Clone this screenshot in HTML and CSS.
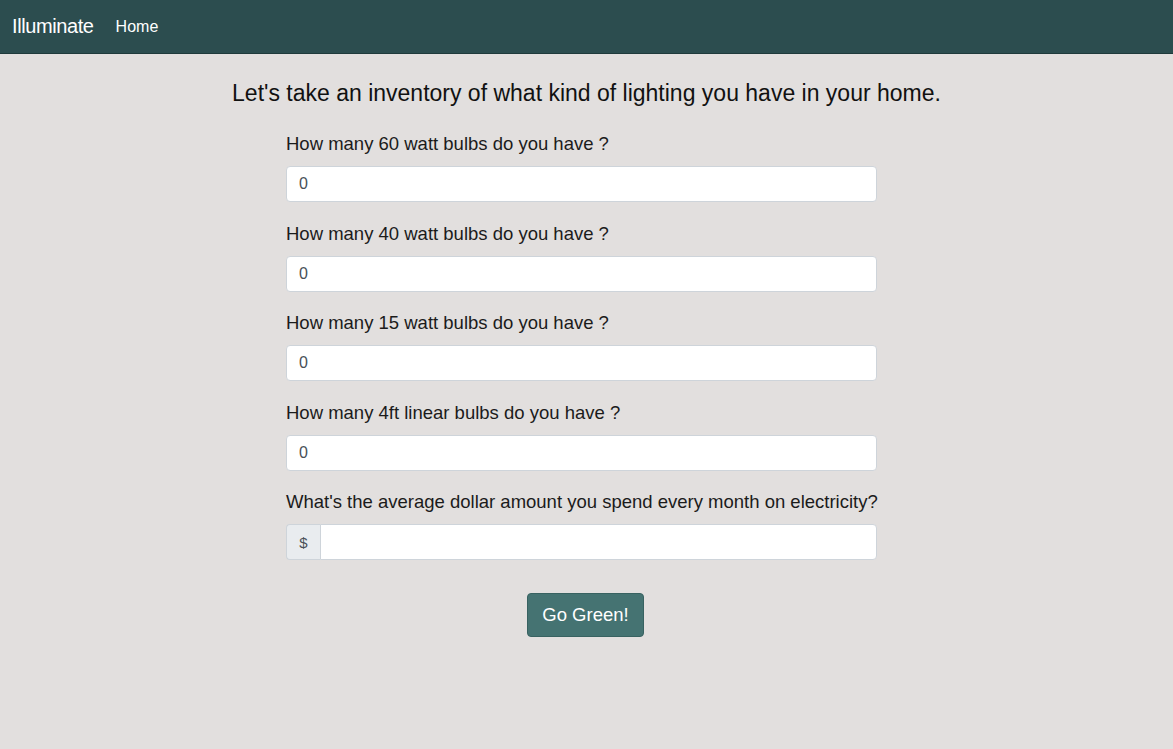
FILE: index.html
```html
<!DOCTYPE html>
<html>
<head>
<meta charset="utf-8">
<link rel="stylesheet" href="styles.css">
</head>
<body>
<nav class="navbar">
  <span class="brand">Illuminate</span>
  <span class="nav-link">Home</span>
</nav>
<main class="main">
  <h1 class="title">Let's take an inventory of what kind of lighting you have in your home.</h1>
  <form class="form">
    <div class="group">
      <label class="label">How many 60 watt bulbs do you have ?</label>
      <input class="input" type="text" value="0">
    </div>
    <div class="group">
      <label class="label">How many 40 watt bulbs do you have ?</label>
      <input class="input" type="text" value="0">
    </div>
    <div class="group">
      <label class="label">How many 15 watt bulbs do you have ?</label>
      <input class="input" type="text" value="0">
    </div>
    <div class="group">
      <label class="label">How many 4ft linear bulbs do you have ?</label>
      <input class="input" type="text" value="0">
    </div>
    <div class="group">
      <label class="label">What's the average dollar amount you spend every month on electricity?</label>
      <div class="input-group">
        <span class="prepend">$</span>
        <input class="input input-grow" type="text" value="">
      </div>
    </div>
    <div class="actions">
      <button class="btn" type="button">Go Green!</button>
    </div>
  </form>
</main>
</body>
</html>
```
FILE: styles.css
```css
* { box-sizing: border-box; }
html, body { margin: 0; padding: 0; }
body {
  background: #e2dfde;
  font-family: "Liberation Sans", Arial, sans-serif;
  color: #212529;
  height: 749px;
}
.navbar {
  height: 54px;
  background: #2c4d4f;
  border-bottom: 1px solid #1f3a3b;
  display: flex;
  align-items: center;
  padding: 0 12px;
  gap: 22px;
}
.brand {
  color: #fff;
  font-size: 20px;
  letter-spacing: -0.4px;
}
.nav-link {
  color: #fff;
  font-size: 16px;
}
.main {
  display: flex;
  flex-direction: column;
  align-items: center;
}
.title {
  margin: 25px 0 0 0;
  font-size: 23px;
  font-weight: 400;
  color: #111;
  line-height: 28px;
}
.form {
  width: 591px;
  margin-top: 25px;
  margin-right: 10px;
  display: flex;
  flex-direction: column;
  gap: 19.5px;
}
.group {
  display: flex;
  flex-direction: column;
  gap: 10px;
}
.label {
  font-size: 18.5px;
  line-height: 24px;
  color: #1b1b1b;
  white-space: nowrap;
}
.input {
  height: 36px;
  border: 1px solid #ced4da;
  border-radius: 4px;
  background: #fff;
  padding: 0 12px;
  font-size: 16px;
  color: #495057;
  font-family: inherit;
  width: 100%;
}
.input-group {
  display: flex;
}
.prepend {
  width: 34px;
  height: 36px;
  display: flex;
  align-items: center;
  justify-content: center;
  background: #e9ecef;
  border: 1px solid #ced4da;
  border-right: none;
  border-radius: 4px 0 0 4px;
  font-size: 15px;
  color: #495057;
}
.input-grow {
  flex: 1;
  border-radius: 0 4px 4px 0;
}
.actions {
  display: flex;
  justify-content: center;
  margin-top: 13px;
  padding-left: 8px;
}
.btn {
  width: 117px;
  height: 44px;
  background: #457372;
  border: 1px solid #386261;
  border-radius: 4px;
  color: #fff;
  font-size: 18.5px;
  font-family: inherit;
}
```
